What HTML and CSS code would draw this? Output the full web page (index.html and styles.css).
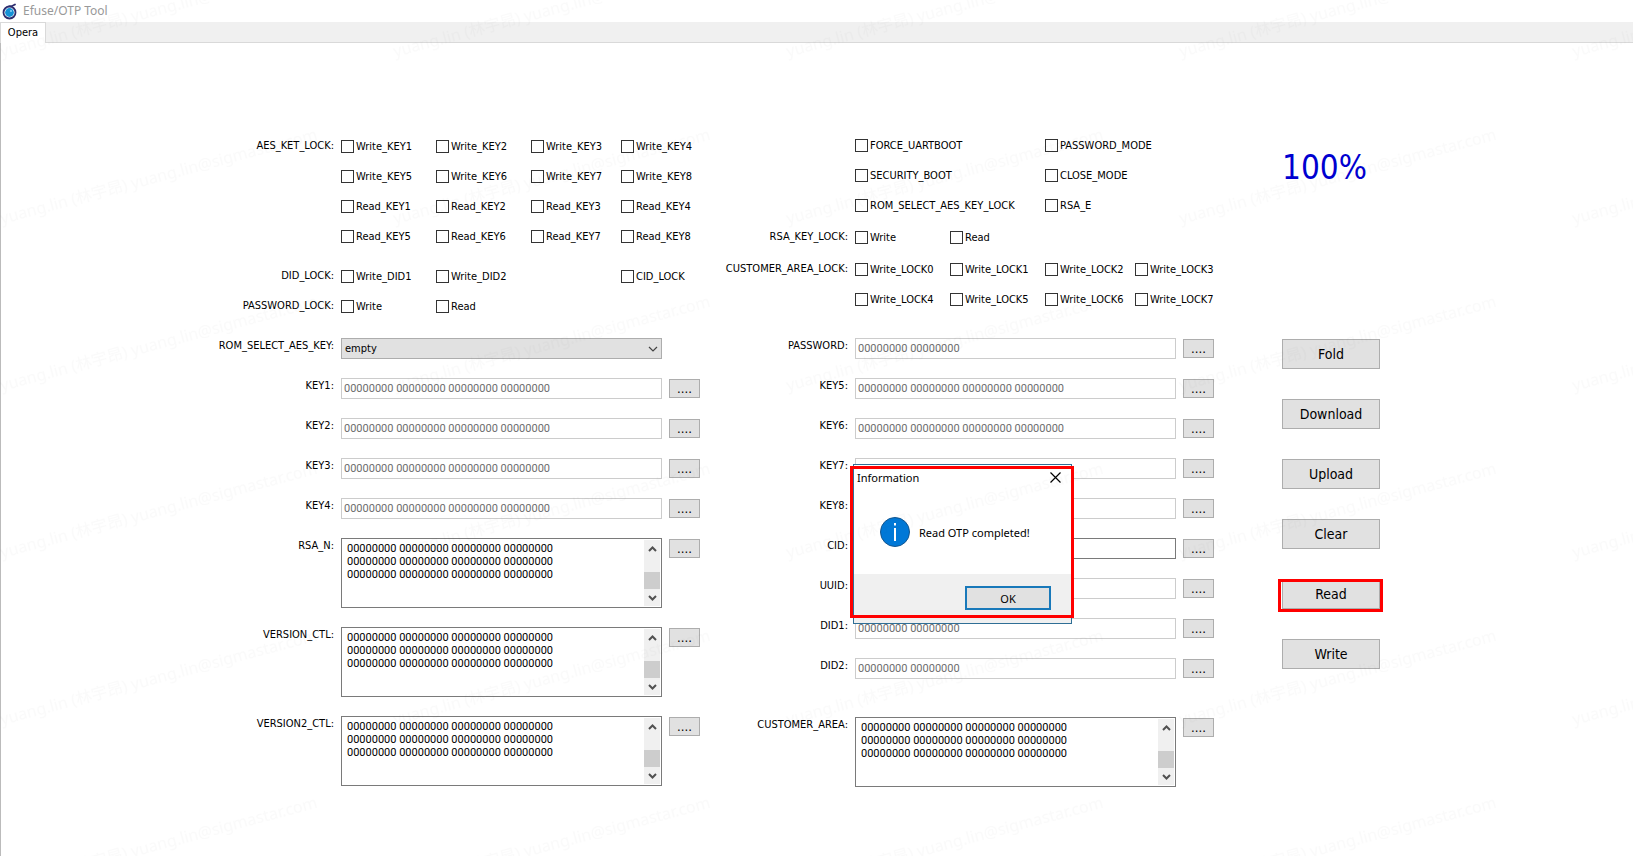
FILE: index.html
```
<!DOCTYPE html>
<html lang="en">
<head>
  <meta charset="UTF-8">
  <meta name="viewport" content="width=device-width, initial-scale=1.0">
  <title>Efuse/OTP Tool</title>
  <link rel="stylesheet" href="styles.css">
</head>
<body>

  <!-- shared icons -->
  <svg class="defs" width="0" height="0">
    <symbol id="up" viewBox="0 0 9 6"><path d="M1 5 L4.500 1.500 L8 5" fill="none" stroke="#505050" stroke-width="2"/></symbol>
    <symbol id="down" viewBox="0 0 9 6"><path d="M1 1 L4.500 4.500 L8 1" fill="none" stroke="#505050" stroke-width="2"/></symbol>
  </svg>

  <header class="titlebar">
    <svg width="16" height="17" viewBox="0 0 16 17">
      <path d="M7 3.500 C10 3.500 11.500 2.500 13 1.500" fill="none" stroke="#2d2d6e" stroke-width="1.800" stroke-linecap="round"/>
      <circle cx="7.500" cy="9.500" r="6" fill="#fff" stroke="#2d2d6e" stroke-width="1.800"/>
      <circle cx="7.500" cy="9.500" r="4.400" fill="#1591d6"/>
      <circle cx="9" cy="8" r="1" fill="#8fd3f5"/>
    </svg>
    <h1>Efuse/OTP Tool</h1>
  </header>
  <nav class="tabs"><button class="tab">Opera</button></nav>

  <main class="page">
    <section class="panel left">
      <div class="locks">
        <div class="lock-row" role="group" aria-labelledby="aes">
          <span class="name" id="aes">AES_KET_LOCK:</span>
          <div class="checks">
            <label><input type="checkbox">Write_KEY1</label>
            <label><input type="checkbox">Write_KEY2</label>
            <label><input type="checkbox">Write_KEY3</label>
            <label><input type="checkbox">Write_KEY4</label>
            <label><input type="checkbox">Write_KEY5</label>
            <label><input type="checkbox">Write_KEY6</label>
            <label><input type="checkbox">Write_KEY7</label>
            <label><input type="checkbox">Write_KEY8</label>
            <label><input type="checkbox">Read_KEY1</label>
            <label><input type="checkbox">Read_KEY2</label>
            <label><input type="checkbox">Read_KEY3</label>
            <label><input type="checkbox">Read_KEY4</label>
            <label><input type="checkbox">Read_KEY5</label>
            <label><input type="checkbox">Read_KEY6</label>
            <label><input type="checkbox">Read_KEY7</label>
            <label><input type="checkbox">Read_KEY8</label>
          </div>
        </div>
        <div class="lock-row spaced" role="group" aria-labelledby="did">
          <span class="name" id="did">DID_LOCK:</span>
          <div class="checks">
            <label><input type="checkbox">Write_DID1</label>
            <label><input type="checkbox">Write_DID2</label>
            <label class="last"><input type="checkbox">CID_LOCK</label>
          </div>
        </div>
        <div class="lock-row" role="group" aria-labelledby="pwl">
          <span class="name" id="pwl">PASSWORD_LOCK:</span>
          <div class="checks">
            <label><input type="checkbox">Write</label>
            <label><input type="checkbox">Read</label>
          </div>
        </div>
      </div>

      <div class="fields">
        <div class="field">
          <label class="name" for="rom">ROM_SELECT_AES_KEY:</label>
          <div class="combo">
            <select id="rom"><option>empty</option></select>
            <svg width="10" height="6" viewBox="0 0 10 6"><path d="M1 1 L5 5 L9 1" fill="none" stroke="#444" stroke-width="1.200"/></svg>
          </div>
          <span class="no-more"></span>
        </div>
        <div class="field">
          <label class="name" for="key1">KEY1:</label>
          <input type="text" id="key1" value="00000000 00000000 00000000 00000000" disabled>
          <button class="more">....</button>
        </div>
        <div class="field">
          <label class="name" for="key2">KEY2:</label>
          <input type="text" id="key2" value="00000000 00000000 00000000 00000000" disabled>
          <button class="more">....</button>
        </div>
        <div class="field">
          <label class="name" for="key3">KEY3:</label>
          <input type="text" id="key3" value="00000000 00000000 00000000 00000000" disabled>
          <button class="more">....</button>
        </div>
        <div class="field">
          <label class="name" for="key4">KEY4:</label>
          <input type="text" id="key4" value="00000000 00000000 00000000 00000000" disabled>
          <button class="more">....</button>
        </div>
        <div class="field">
          <label class="name" for="rsan">RSA_N:</label>
          <div class="memo">
            <textarea id="rsan">00000000 00000000 00000000 00000000
00000000 00000000 00000000 00000000
00000000 00000000 00000000 00000000</textarea>
            <div class="scroll"><svg><use href="#up"/></svg><i></i><svg><use href="#down"/></svg></div>
          </div>
          <button class="more">....</button>
        </div>
        <div class="field">
          <label class="name" for="ver">VERSION_CTL:</label>
          <div class="memo">
            <textarea id="ver">00000000 00000000 00000000 00000000
00000000 00000000 00000000 00000000
00000000 00000000 00000000 00000000</textarea>
            <div class="scroll"><svg><use href="#up"/></svg><i></i><svg><use href="#down"/></svg></div>
          </div>
          <button class="more">....</button>
        </div>
        <div class="field">
          <label class="name" for="ver2">VERSION2_CTL:</label>
          <div class="memo">
            <textarea id="ver2">00000000 00000000 00000000 00000000
00000000 00000000 00000000 00000000
00000000 00000000 00000000 00000000</textarea>
            <div class="scroll"><svg><use href="#up"/></svg><i></i><svg><use href="#down"/></svg></div>
          </div>
          <button class="more">....</button>
        </div>
      </div>
    </section>

    <section class="panel right">
      <div class="locks">
        <div class="lock-row">
          <span class="name"></span>
          <div class="checks wide">
            <label><input type="checkbox">FORCE_UARTBOOT</label>
            <label><input type="checkbox">PASSWORD_MODE</label>
            <label><input type="checkbox">SECURITY_BOOT</label>
            <label><input type="checkbox">CLOSE_MODE</label>
            <label><input type="checkbox">ROM_SELECT_AES_KEY_LOCK</label>
            <label><input type="checkbox">RSA_E</label>
          </div>
        </div>
        <div class="lock-row" role="group" aria-labelledby="rsakey">
          <span class="name" id="rsakey">RSA_KEY_LOCK:</span>
          <div class="checks">
            <label><input type="checkbox">Write</label>
            <label><input type="checkbox">Read</label>
          </div>
        </div>
        <div class="lock-row" role="group" aria-labelledby="cust">
          <span class="name" id="cust">CUSTOMER_AREA_LOCK:</span>
          <div class="checks">
            <label><input type="checkbox">Write_LOCK0</label>
            <label><input type="checkbox">Write_LOCK1</label>
            <label><input type="checkbox">Write_LOCK2</label>
            <label><input type="checkbox">Write_LOCK3</label>
            <label><input type="checkbox">Write_LOCK4</label>
            <label><input type="checkbox">Write_LOCK5</label>
            <label><input type="checkbox">Write_LOCK6</label>
            <label><input type="checkbox">Write_LOCK7</label>
          </div>
        </div>
      </div>

      <div class="fields">
        <div class="field">
          <label class="name" for="pw">PASSWORD:</label>
          <input type="text" id="pw" value="00000000 00000000" disabled>
          <button class="more">....</button>
        </div>
        <div class="field">
          <label class="name" for="key5">KEY5:</label>
          <input type="text" id="key5" value="00000000 00000000 00000000 00000000" disabled>
          <button class="more">....</button>
        </div>
        <div class="field">
          <label class="name" for="key6">KEY6:</label>
          <input type="text" id="key6" value="00000000 00000000 00000000 00000000" disabled>
          <button class="more">....</button>
        </div>
        <div class="field">
          <label class="name" for="key7">KEY7:</label>
          <input type="text" id="key7" disabled>
          <button class="more">....</button>
        </div>
        <div class="field">
          <label class="name" for="key8">KEY8:</label>
          <input type="text" id="key8" disabled>
          <button class="more">....</button>
        </div>
        <div class="field">
          <label class="name" for="cid">CID:</label>
          <input type="text" id="cid">
          <button class="more">....</button>
        </div>
        <div class="field">
          <label class="name" for="uuid">UUID:</label>
          <input type="text" id="uuid" disabled>
          <button class="more">....</button>
        </div>
        <div class="field">
          <label class="name" for="did1">DID1:</label>
          <input type="text" id="did1" value="00000000 00000000" disabled>
          <button class="more">....</button>
        </div>
        <div class="field">
          <label class="name" for="did2">DID2:</label>
          <input type="text" id="did2" value="00000000 00000000" disabled>
          <button class="more">....</button>
        </div>
        <div class="field customer">
          <label class="name" for="area">CUSTOMER_AREA:</label>
          <div class="memo">
            <textarea id="area">00000000 00000000 00000000 00000000
00000000 00000000 00000000 00000000
00000000 00000000 00000000 00000000</textarea>
            <div class="scroll"><svg><use href="#up"/></svg><i></i><svg><use href="#down"/></svg></div>
          </div>
          <button class="more">....</button>
        </div>
      </div>

      <!-- message box -->
      <div class="dialog" role="dialog" aria-labelledby="dlg-title">
        <div class="dialog-head">
          <h2 id="dlg-title">Information</h2>
          <button class="close" aria-label="Close">
            <svg width="11" height="11" viewBox="0 0 11 11"><path d="M.5 .5 L10.500 10.500 M10.500 .5 L.5 10.500" stroke="#000" stroke-width="1.200"/></svg>
          </button>
        </div>
        <div class="dialog-body">
          <svg width="30" height="30" viewBox="0 0 30 30">
            <circle cx="15" cy="15" r="14.500" fill="#0078d7" stroke="#14568f"/>
            <path d="M15 6 V8.500 M15 11 V24" stroke="#fff" stroke-width="2"/>
          </svg>
          <p>Read OTP completed!</p>
        </div>
        <div class="dialog-foot"><button class="ok">OK</button></div>
        <span class="mark"></span>
      </div>
    </section>

    <section class="actions">
      <output class="progress">100%</output>
      <button>Fold</button>
      <button>Download</button>
      <button>Upload</button>
      <button>Clear</button>
      <div class="marked"><button>Read</button><span class="mark"></span></div>
      <button>Write</button>
    </section>
  </main>

  <!-- watermark -->
  <svg class="watermark" aria-hidden="true">
    <pattern id="wm" x="-6" y="-50" width="393" height="167" patternUnits="userSpaceOnUse">
      <text x="8" y="107" transform="rotate(-15 8 107)">yuang.lin (林宇昂) yuang.lin@sigmastar.com</text>
    </pattern>
    <rect width="100%" height="100%" fill="url(#wm)"/>
  </svg>

</body>
</html>
```
FILE: styles.css
```
* {
  box-sizing: border-box;
}
body {
  margin: 0;
  min-height: 100vh;
  display: flex;
  flex-direction: column;
  position: relative;
  background: #fff;
  color: #000;
  font-family: "DejaVu Sans Condensed", "Noto Sans", "Noto Sans CJK SC", sans-serif;
  font-size: 11px;
}
button, input, select, textarea {
  font: inherit;
  color: inherit;
  margin: 0;
  border-radius: 0;
}
.defs {
  position: absolute;
}
.titlebar {
  display: flex;
  align-items: center;
  gap: 5px;
  height: 22px;
  padding-left: 2px;
}
.titlebar h1 {
  margin: 0;
  font: 12px/20px "Noto Sans", sans-serif;
  color: #999;
}
.tabs {
  display: flex;
  height: 21px;
  background: #f0f0f0;
  border-bottom: 1px solid #d9d9d9;
}
.tab {
  width: 46px;
  height: 21px;
  padding: 0 0 2px;
  background: #fff;
  border: 1px solid #d9d9d9;
  border-bottom: none;
}
/* two form columns and the action buttons */
.page {
  flex: 1;
  display: grid;
  grid-template-columns: 500fr 514fr 419fr;
  padding: 96px 0 0 199px;
  border-left: 1px solid #bbb;
}
.panel {
  position: relative;
}
.name {
  flex: none;
  width: 134px;
  text-align: right;
  white-space: nowrap;
  line-height: 14px;
}
.right .name {
  width: 148px;
}
.locks {
  display: flex;
  flex-direction: column;
  gap: 19px;
  height: 199px;
}
.left .locks {
  gap: 17px;
  padding-top: 1px;
}
.lock-row {
  display: flex;
  gap: 7px;
}
.lock-row .name {
  line-height: 11px;
}
.spaced {
  margin-top: 10px;
}
.checks {
  display: grid;
  grid-template-columns: 95px 95px 90px 79px;
  row-gap: 17px;
}
.checks.wide {
  grid-template-columns: 190px 169px;
}
.checks label {
  display: flex;
  align-items: center;
  gap: 2px;
  height: 13px;
  white-space: nowrap;
}
.checks .last {
  grid-column: 4;
}
.checks input {
  appearance: none;
  width: 13px;
  height: 13px;
  background: #fff;
  border: 1px solid #333;
}
.fields {
  display: flex;
  flex-direction: column;
  gap: 19px;
}
.field {
  display: flex;
  align-items: flex-start;
  gap: 7px;
}
.field .name {
  line-height: 15px;
}
.field input, .combo {
  flex: 1;
  min-width: 0;
  height: 21px;
}
.field input {
  padding: 0 2px;
  background: #fff;
  border: 1px solid #7a7a7a;
  font-family: Roboto, sans-serif;
}
.field input:disabled {
  color: #6d6d6d;
  border-color: #ccc;
}
.combo {
  display: grid;
  align-items: center;
}
.combo select, .combo svg {
  grid-area: 1 / 1;
}
.combo select {
  appearance: none;
  width: 100%;
  height: 21px;
  padding: 0 3px;
  background: #e1e1e1;
  border: 1px solid #adadad;
}
.combo svg {
  justify-self: end;
  margin-right: 4px;
  pointer-events: none;
}
.more, .no-more {
  flex: none;
  width: 31px;
}
.more {
  height: 19px;
  margin-top: 1px;
  padding: 0;
  font-size: 13px;
  line-height: 17px;
}
.more, .actions button, .ok {
  background: #e1e1e1;
  border: 1px solid #adadad;
}
.memo {
  flex: 1;
  min-width: 0;
  display: flex;
  height: 70px;
  padding: 1px;
  border: 1px solid #7a7a7a;
}
.memo textarea {
  flex: 1;
  min-width: 0;
  padding: 2px 4px;
  border: none;
  outline: none;
  resize: none;
  overflow: hidden;
  font-family: Roboto, sans-serif;
  line-height: 13px;
}
.scroll {
  display: flex;
  flex-direction: column;
  align-items: center;
  width: 16px;
  padding: 6px 0 5px;
  background: #f0f0f0;
}
.scroll svg {
  width: 9px;
  height: 6px;
}
.scroll i {
  width: 100%;
  height: 17px;
  margin: auto 0 6px;
  background: #cdcdcd;
}
.customer {
  margin-top: 19px;
}
.actions {
  display: flex;
  flex-direction: column;
  align-items: flex-start;
  gap: 30px;
  padding-left: 68px;
}
.actions button {
  width: 98px;
  height: 30px;
  padding: 0;
  font-size: 14px;
}
.progress {
  height: 170px;
  padding-top: 8px;
  font-size: 33px;
  line-height: 42px;
  color: #0000d0;
}
.marked {
  position: relative;
  height: 30px;
}
.mark {
  position: absolute;
  border: 3px solid #f00;
  pointer-events: none;
}
.marked .mark {
  inset: 0 -3px -3px -4px;
}
.dialog {
  position: absolute;
  left: 153px;
  top: 325px;
  width: 219px;
  height: 160px;
  display: flex;
  flex-direction: column;
  background: #fff;
  border: 1px solid #2f6f96;
  font: 11px "Noto Sans", sans-serif;
}
.dialog .mark {
  inset: 1px -3px 5px -4px;
}
.dialog-head {
  display: flex;
  align-items: center;
  justify-content: space-between;
  height: 25px;
  padding: 0 10px 0 3px;
}
.dialog h2 {
  margin: 0;
  font-size: 11px;
  font-weight: normal;
}
.close {
  display: flex;
  padding: 0;
  background: none;
  border: none;
}
.dialog-body {
  flex: 1;
  display: flex;
  align-items: center;
  gap: 9px;
  padding-left: 26px;
}
.dialog p {
  margin: 0;
  white-space: nowrap;
}
.dialog-foot {
  height: 49px;
  padding: 12px 20px;
  text-align: right;
  background: #f0f0f0;
}
.ok {
  width: 86px;
  height: 24px;
  padding: 0;
  border: 2px solid #1979ba;
}
.watermark {
  position: absolute;
  inset: 0;
  width: 100%;
  height: 100%;
  pointer-events: none;
}
.watermark text {
  font: 16px "Noto Sans", "Noto Sans CJK SC", sans-serif;
  fill: #000;
  fill-opacity: .02;
}
```
